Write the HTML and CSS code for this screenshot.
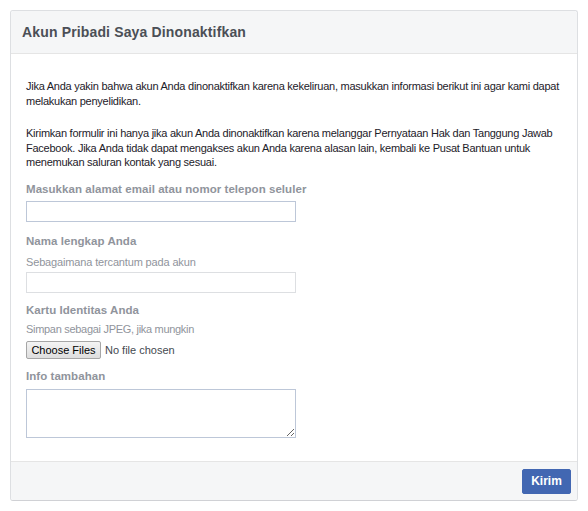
FILE: index.html
```html
<!DOCTYPE html>
<html lang="id">
<head>
<meta charset="utf-8">
<title>Akun Pribadi Saya Dinonaktifkan</title>
<link rel="stylesheet" href="styles.css">
</head>
<body>
<div class="card">
  <div class="card-header">Akun Pribadi Saya Dinonaktifkan</div>
  <form class="card-body">
    <p class="intro">Jika Anda yakin bahwa akun Anda dinonaktifkan karena kekeliruan, masukkan informasi berikut ini agar kami dapat melakukan penyelidikan.</p>
    <p class="intro second">Kirimkan formulir ini hanya jika akun Anda dinonaktifkan karena melanggar Pernyataan Hak dan Tanggung Jawab Facebook. Jika Anda tidak dapat mengakses akun Anda karena alasan lain, kembali ke Pusat Bantuan untuk menemukan saluran kontak yang sesuai.</p>

    <label class="label first">Masukkan alamat email atau nomor telepon seluler</label>
    <input class="field focused" type="text">

    <label class="label name">Nama lengkap Anda</label>
    <div class="hint">Sebagaimana tercantum pada akun</div>
    <input class="field plain" type="text">

    <label class="label">Kartu Identitas Anda</label>
    <div class="hint tight">Simpan sebagai JPEG, jika mungkin</div>
    <div class="file-row">
      <button type="button" class="file-btn">Choose Files</button>
      <span class="file-status">No file chosen</span>
    </div>

    <label class="label">Info tambahan</label>
    <textarea class="area"></textarea>
  </form>
  <div class="card-footer">
    <button type="button" class="submit">Kirim</button>
  </div>
</div>
</body>
</html>
```

FILE: styles.css
```css
html, body {
  margin: 0;
  padding: 0;
  background: #fff;
}

body {
  padding: 10px;
  font-family: "Liberation Sans", Arial, Helvetica, sans-serif;
  color: #1d2129;
}

.card {
  width: 566px;
  border: 1px solid #dddfe2;
  border-bottom-color: #d0d1d5;
  border-radius: 3px;
  background: #fff;
}

.card-header {
  height: 43px;
  box-sizing: border-box;
  padding: 0 11px;
  background: #f5f6f7;
  border-bottom: 1px solid #e5e5e5;
  border-radius: 3px 3px 0 0;
  font-size: 14px;
  font-weight: bold;
  letter-spacing: 0.15px;
  color: #4b4f56;
  line-height: 43px;
}

.card-body {
  display: flex;
  flex-direction: column;
  align-items: flex-start;
  padding: 25px 10px 23px 15px;
  margin: 0;
}

.intro {
  margin: 0;
  font-size: 11px;
  line-height: 14.5px;
  letter-spacing: -0.25px;
  color: #1d2129;
}

.intro.second {
  margin-top: 18px;
}

.label {
  display: block;
  font-size: 11.5px;
  font-weight: bold;
  line-height: 16px;
  letter-spacing: 0.05px;
  color: #90949c;
  margin-top: 9px;
}

.label.first {
  margin-top: 11px;
}

.label.name {
  margin-top: 11px;
}

.hint {
  font-size: 11px;
  line-height: 16px;
  letter-spacing: -0.15px;
  color: #90949c;
  margin-top: 5px;
}

.hint.tight {
  margin-top: 3px;
  letter-spacing: -0.3px;
}

.field {
  box-sizing: border-box;
  width: 270px;
  height: 21px;
  margin: 4px 0 0 0;
  padding: 2px 3px;
  border: 1px solid #bdc7d8;
  font-family: inherit;
  font-size: 12px;
  background: #fff;
  outline: none;
}

.field.plain {
  border-color: #dddfe2;
  margin-top: 2px;
}

.file-row {
  display: flex;
  align-items: center;
  gap: 4px;
  margin-top: 4px;
}

.file-btn {
  box-sizing: border-box;
  width: 75px;
  height: 18px;
  padding: 0;
  border: 1px solid #a6a6a6;
  border-radius: 2px;
  background: linear-gradient(#f4f4f4, #dedede);
  font-family: inherit;
  font-size: 11px;
  line-height: 16px;
  color: #000;
  margin: 0;
}

.file-status {
  font-size: 11px;
  color: #444950;
}

.area {
  box-sizing: border-box;
  width: 270px;
  height: 49px;
  margin-top: 5px;
  border: 1px solid #bdc7d8;
  padding: 3px;
  font-family: inherit;
  font-size: 12px;
  resize: both;
  outline: none;
}

.card-footer {
  display: flex;
  justify-content: flex-end;
  padding: 7px 6px 6px 6px;
  background: #f5f6f7;
  border-top: 1px solid #e5e5e5;
  border-radius: 0 0 3px 3px;
}

.submit {
  box-sizing: border-box;
  width: 49px;
  height: 25px;
  padding: 0;
  border: 1px solid #4267b2;
  border-radius: 2px;
  background: #4267b2;
  color: #fff;
  font-family: inherit;
  font-size: 12px;
  font-weight: bold;
  line-height: 23px;
}
```
